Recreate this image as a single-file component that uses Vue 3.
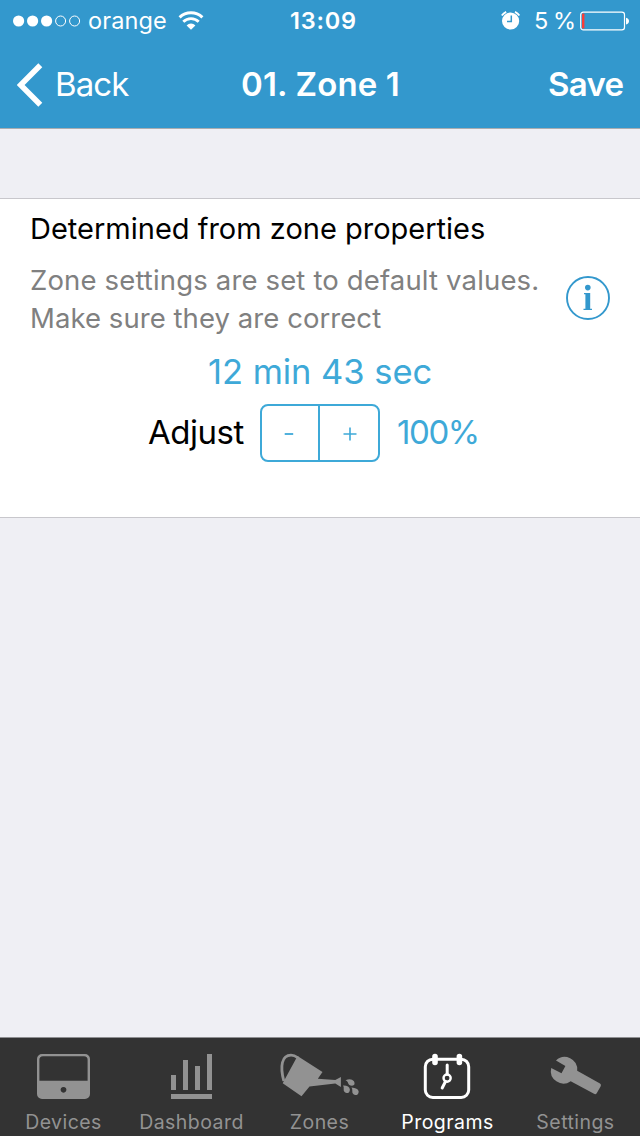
<script setup>
const signal = [true, true, true, false, false]
const tabs = [
  { id: 'devices', label: 'Devices' },
  { id: 'dashboard', label: 'Dashboard' },
  { id: 'zones', label: 'Zones' },
  { id: 'programs', label: 'Programs', active: true },
  { id: 'settings', label: 'Settings' },
]
</script>

<template>
  <div class="screen">
    <header class="header">
      <div class="status">
        <div class="status-left">
          <svg class="signal" width="70" height="14" viewBox="0 0 70 14">
            <circle
              v-for="(on, i) in signal"
              :key="i"
              :cx="5.6 + i * 14"
              cy="7"
              :r="on ? 5.6 : 5"
              :fill="on ? '#fff' : 'none'"
              stroke="#fff"
              :stroke-width="on ? 0 : 1"
            />
          </svg>
          <span class="carrier">orange</span>
          <svg class="wifi" width="26" height="20" viewBox="0 0 26 20">
            <path d="M1.6 6.4A16.4 16.4 0 0 1 24.4 6.4" fill="none" stroke="#fff" stroke-width="3" />
            <path d="M5.3 10.8A11 11 0 0 1 20.7 10.8" fill="none" stroke="#fff" stroke-width="2.8" />
            <path d="M8.6 14.4A6.2 6.2 0 0 1 17.4 14.4L13 18.8Z" fill="#fff" />
          </svg>
        </div>
        <span class="clock">13:09</span>
        <div class="status-right">
          <svg class="alarm" width="20" height="20" viewBox="0 0 20 20">
            <circle cx="9.6" cy="10" r="8.6" fill="#fff" />
            <path d="M.8 4.6A10.6 10.6 0 0 1 5.2 .9M14 .9A10.6 10.6 0 0 1 18.4 4.6" fill="none" stroke="#fff" stroke-width="1.8" />
            <path d="M10.3 4.6v6H6" fill="none" stroke="#3398cd" stroke-width="1.5" />
          </svg>
          <span class="percent">5 %</span>
          <svg class="battery" width="50" height="20" viewBox="0 0 50 20">
            <rect x=".7" y="1.1" width="43.8" height="17.8" rx="2.6" fill="none" stroke="#fff" stroke-width="1.2" />
            <rect x="2" y="2.5" width="2.4" height="15" rx=".8" fill="#fa3c37" />
            <path d="M46 6.7Q49 7.5 49 10T46 13.5Z" fill="#fff" />
          </svg>
        </div>
      </div>
      <nav class="nav">
        <div class="back">
          <svg width="26" height="44" viewBox="0 0 26 44">
            <path d="M23.3 2.3L3.6 22L23.3 41.7" fill="none" stroke="#fff" stroke-width="5.6" />
          </svg>
          <span>Back</span>
        </div>
        <span class="nav-title">01. Zone 1</span>
        <span class="save">Save</span>
      </nav>
    </header>

    <main class="content">
      <section class="card">
        <h1 class="heading">Determined from zone properties</h1>
        <div class="notice">
          <p class="hint">Zone settings are set to default values.<br /><span class="hint-second">Make sure they are correct</span></p>
          <svg class="info" width="44" height="44" viewBox="0 0 44 44">
            <circle cx="22" cy="22" r="21" fill="none" stroke="#3398cd" stroke-width="1.9" />
            <circle cx="21.8" cy="11.6" r="2.8" fill="#3398cd" />
            <path d="M18 17h6.2v15.7h1.8v1.2h-8.5v-1.2h1.9V18.2H18Z" fill="#3398cd" />
          </svg>
        </div>
        <div class="duration">12 min 43 sec</div>
        <div class="adjust">
          <span class="adjust-label">Adjust</span>
          <div class="stepper">
            <div class="step">
              <svg width="14" height="14" viewBox="0 0 14 14"><path d="M2.7 7h8.5" stroke="#3ea9d8" stroke-width="1.8" /></svg>
            </div>
            <div class="step plus">
              <svg width="14" height="14" viewBox="0 0 14 14"><path d="M.5 7h13M7 .5v13" stroke="#3ea9d8" stroke-width="1.6" /></svg>
            </div>
          </div>
          <span class="adjust-value">100%</span>
        </div>
      </section>
    </main>

    <footer class="tabbar">
      <div v-for="t in tabs" :key="t.id" class="tab" :class="{ active: t.active }">
        <svg v-if="t.id === 'devices'" width="128" height="66" viewBox="0 0 128 66">
          <path fill-rule="evenodd" d="M42 16h43a5 5 0 0 1 5 5v35a5 5 0 0 1-5 5H42a5 5 0 0 1-5-5V21a5 5 0 0 1 5-5ZM43 18.2a3.6 3.6 0 0 0-3.6 3.6v20.9h48.2v-20.9a3.6 3.6 0 0 0-3.6-3.6ZM63.5 48.9a2.9 2.9 0 1 0 .01 0Z" fill="currentColor" />
        </svg>
        <svg v-else-if="t.id === 'dashboard'" width="128" height="66" viewBox="0 0 128 66">
          <path d="M43 37h5v15h-5zM55 22h5v30h-5zM67 28h5v24h-5zM79 16h5v36h-5zM43 56h41v5H43z" fill="currentColor" />
        </svg>
        <svg v-else-if="t.id === 'zones'" width="128" height="66" viewBox="0 0 128 66">
          <path d="M27.8 43C23.800 28 25.800 17.300 35 17.200Q38.200 17.200 42 19.800" fill="none" stroke="currentColor" stroke-width="2.800" />
          <path d="M41.500 18L66.500 34L61.800 40.700L79.300 41.900L84.900 39v10L79.300 45.600L53.500 48.400L45.500 58.300L26.700 45.300Z" fill="currentColor" />
          <path d="M89.500 42.200Q95 39.600 98 43.300Q99.800 47.300 96 47.800Q92.800 47.700 91.900 44.500Q91.200 42.700 89.500 42.200ZM87 47.600Q93.300 47.400 93.900 51.400Q93.800 55.200 90.600 55.100Q87.300 54.200 87.700 51Q88 49 87 47.600ZM95.500 49.600Q101.900 50.200 102.700 53.400Q102.600 57.200 99.200 57.100Q96 56.200 96.300 53Q96.500 51 95.500 49.600Z" fill="currentColor" />
        </svg>
        <svg v-else-if="t.id === 'programs'" width="128" height="66" viewBox="0 0 128 66">
          <g fill="none" stroke="currentColor" stroke-linecap="round">
            <rect x="41.3" y="21.2" width="43.4" height="38.300" rx="7.500" stroke-width="3" />
            <path d="M51 18.500v6M75.400 18.500v6" stroke-width="5.600" />
            <path d="M63.200 27v9" stroke-width="3" />
            <path d="M61.500 43.500L58.200 50" stroke-width="3" />
            <circle cx="63.100" cy="40.100" r="3.600" stroke-width="2.400" />
          </g>
        </svg>
        <svg v-else width="128" height="66" viewBox="0 0 128 66">
          <path d="M44 22.400A12.600 12.600 0 0 1 65.200 32.700L88 45.500Q89.600 46.500 88.700 48.200L84.700 55.200Q83.600 56.700 82 55.800L58.700 43.200A12.600 12.600 0 0 1 39.200 30L49.500 35.200L53.400 28Z" fill="currentColor" />
        </svg>
        <span class="tab-label">{{ t.label }}</span>
      </div>
    </footer>
  </div>
</template>

<style>
body {
  background: #efeff4;
}
</style>

<style scoped>
.screen {
  width: 640px;
  height: 1136px;
  display: flex;
  flex-direction: column;
  background: #efeff4;
  font-family: Inter, "Liberation Sans", sans-serif;
  white-space: nowrap;
  overflow: hidden;
}
.screen svg {
  display: block;
  flex: none;
}
.header {
  height: 128px;
  background: #3398cd;
  border-bottom: 1px solid #a9adb1;
  color: #fff;
}
.status {
  height: 41px;
  display: grid;
  grid-template-columns: 250px 146px 244px;
  align-items: center;
  font-size: 23.5px;
  line-height: 41px;
}
.status-left,
.status-right {
  display: flex;
  align-items: center;
}
.signal {
  margin-left: 13px;
}
.carrier {
  margin-left: 5px;
  width: 90px;
  letter-spacing: 0.1px;
}
.clock {
  padding-left: 40px;
  font-weight: 600;
  letter-spacing: 0.8px;
}
.alarm {
  margin-left: 105px;
}
.percent {
  margin-left: 13px;
  width: 46px;
  letter-spacing: -0.5px;
  word-spacing: -1px;
}
.nav {
  height: 87px;
  display: grid;
  grid-template-columns: 241px 307px 92px;
  align-items: center;
  font-size: 33px;
  line-height: 87px;
}
.back {
  display: flex;
  align-items: center;
}
.back svg {
  margin-left: 17px;
}
.back span {
  margin-left: 12px;
  letter-spacing: -0.9px;
}
.nav-title,
.save {
  font-weight: 600;
}
.nav-title {
  letter-spacing: 0.15px;
}
.save {
  letter-spacing: -0.7px;
}
.content {
  flex: 1;
  padding-top: 69px;
}
.card {
  height: 318px;
  background: #fff;
  border-top: 1px solid #c8c7cc;
  border-bottom: 1px solid #c8c7cc;
}
.heading {
  margin: 0;
  padding: 10px 0 0 30px;
  font-size: 29px;
  font-weight: 400;
  line-height: 40px;
  color: #000;
}
.notice {
  display: flex;
  justify-content: space-between;
  padding: 12px 30px 0;
}
.hint {
  margin: 0;
  font-size: 27.5px;
  line-height: 38px;
  letter-spacing: 0.15px;
  color: #808080;
}
.hint-second {
  letter-spacing: 0.06px;
}
.info {
  margin-top: 15px;
}
.duration {
  margin-top: 14px;
  padding-left: 208px;
  font-size: 34.5px;
  line-height: 42px;
  letter-spacing: -0.05px;
  color: #3ea9d8;
}
.adjust {
  display: flex;
  margin-top: 11px;
  line-height: 57px;
  font-size: 33px;
}
.adjust-label {
  width: 112px;
  margin-left: 148px;
  letter-spacing: -0.5px;
  color: #000;
}
.stepper {
  display: flex;
  box-sizing: border-box;
  width: 120px;
  height: 58px;
  border: 2px solid #3ea9d8;
  border-radius: 8px;
}
.step {
  display: flex;
  box-sizing: border-box;
  width: 56px;
  padding: 21px 0 0 20px;
}
.step.plus {
  width: 60px;
  padding-left: 23px;
  border-left: 2px solid #3ea9d8;
}
.adjust-value {
  margin-left: 17px;
  letter-spacing: -1.4px;
  color: #3ea9d8;
}
.tabbar {
  display: flex;
  height: 98px;
  border-top: 1px solid #8f8f92;
  background: #333;
}
.tab {
  width: 128px;
  color: #929292;
}
.tab.active {
  color: #fff;
}
.tab-label {
  display: block;
  width: 127px;
  margin-top: 4px;
  text-align: center;
  font-size: 19.5px;
  line-height: 28px;
  letter-spacing: 0.45px;
}
</style>
